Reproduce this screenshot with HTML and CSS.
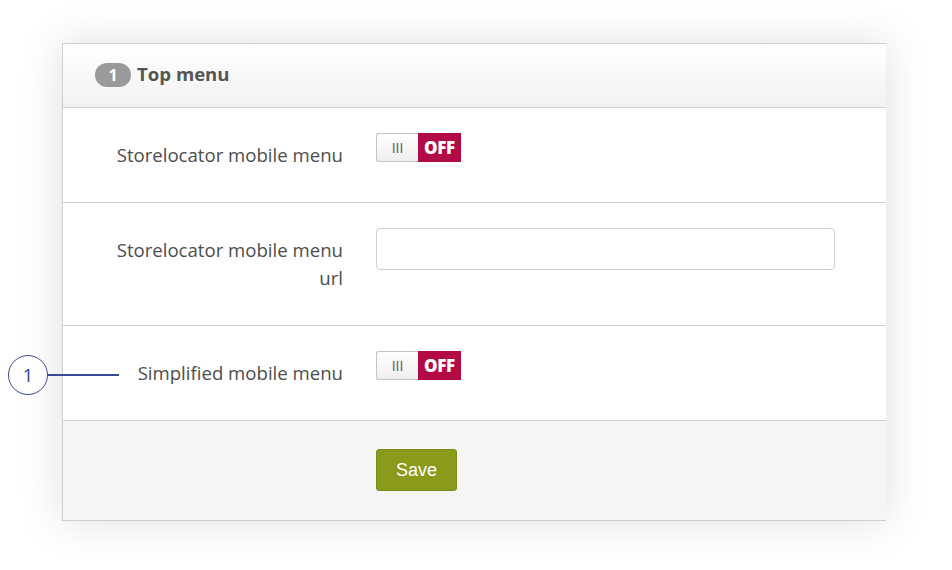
FILE: index.html
```html
<!DOCTYPE html>
<html>
<head>
<meta charset="utf-8">
<link rel="stylesheet" href="styles.css">
</head>
<body>
<div class="stage">
  <div class="panel">
    <div class="panel-head">
      <span class="badge">1</span>
      <span class="head-title">Top menu</span>
    </div>
    <div class="row">
      <div class="label">Storelocator mobile menu</div>
      <div class="control">
        <div class="switch"><span class="grip">III</span><span class="off">OFF</span></div>
      </div>
    </div>
    <div class="row">
      <div class="label">Storelocator mobile menu url</div>
      <div class="control">
        <input class="text-input" type="text">
      </div>
    </div>
    <div class="row">
      <div class="label">Simplified mobile menu</div>
      <div class="control">
        <div class="switch"><span class="grip">III</span><span class="off">OFF</span></div>
      </div>
    </div>
    <div class="panel-foot">
      <button class="save">Save</button>
    </div>
  </div>
  <div class="callout">
    <span class="callout-circle">1</span>
    <span class="callout-line"></span>
  </div>
</div>
</body>
</html>
```
FILE: styles.css
```css
html, body {
  margin: 0;
  padding: 0;
  background: #fff;
}
body {
  font-family: "Open Sans", "DejaVu Sans", sans-serif;
  width: 952px;
  height: 570px;
  overflow: hidden;
}
.stage {
  position: relative;
  padding: 43px 0 0 62px;
}
.panel {
  width: 823px;
  border: 1px solid #cfcfcf;
  border-right: none;
  background: #fff;
  box-shadow: 0 0 40px rgba(0,0,0,0.13);
}
.panel-head {
  display: flex;
  align-items: center;
  padding-left: 32px;
  background: linear-gradient(#fff, #f2f2f2);
  border-bottom: 1px solid #d0d0d0;
  box-sizing: border-box;
  height: 64px;
}
.badge {
  display: inline-flex;
  align-items: center;
  justify-content: center;
  width: 36px;
  height: 24px;
  border-radius: 12px;
  background: #9a9a9a;
  color: #fff;
  font-weight: 700;
  font-size: 16px;
  margin-top: -2px;
}
.head-title {
  margin-left: 6px;
  font-weight: 700;
  font-size: 18.6px;
  color: #555;
  margin-top: -4px;
}
.row {
  display: flex;
  border-bottom: 1px solid #d0d0d0;
  padding: 33px 0 33px 0;
}
.label {
  width: 280px;
  padding-left: 40px;
  text-align: right;
  font-size: 18.6px;
  line-height: 28px;
  color: #4d4d4d;
  box-sizing: border-box;
}
.control {
  margin-left: 33px;
  margin-top: -8px;
}
.switch {
  display: flex;
  width: 85px;
  height: 29px;
}
.grip {
  width: 42px;
  box-sizing: border-box;
  border: 1px solid #c4c4c4;
  border-right: none;
  border-radius: 3px 0 0 3px;
  background: linear-gradient(#fff, #efefef);
  color: #666;
  font-family: "Liberation Sans", sans-serif;
  font-size: 14px;
  display: flex;
  align-items: center;
  justify-content: center;
}
.off {
  width: 43px;
  background: #b30a45;
  color: #fff;
  font-weight: 800;
  font-size: 17px;
  letter-spacing: -0.3px;
  display: flex;
  align-items: center;
  justify-content: center;
}
.text-input {
  display: block;
  width: 459px;
  height: 42px;
  box-sizing: border-box;
  border: 1px solid #cfcfcf;
  border-radius: 4px;
  margin: 0;
  padding: 0 10px;
  background: #fff;
}
.panel-foot {
  background: #f5f5f5;
  padding: 28px 0 29px 313px;
}
.save {
  display: block;
  width: 81px;
  height: 42px;
  background: #8a9a1b;
  border: 1px solid #7c8b16;
  border-radius: 3px;
  color: #fff;
  font-family: "Liberation Sans", Arial, sans-serif;
  font-size: 18px;
  padding: 0;
}
.callout {
  position: absolute;
  left: 8px;
  top: 355px;
  display: flex;
  align-items: center;
}
.callout-circle {
  width: 40px;
  height: 40px;
  box-sizing: border-box;
  border: 1.5px solid #3a4896;
  border-radius: 50%;
  background: #fff;
  color: #3a4896;
  font-family: "Open Sans", sans-serif;
  font-size: 19px;
  display: flex;
  align-items: center;
  justify-content: center;
}
.callout-line {
  width: 71px;
  height: 1.5px;
  background: #3a4896;
}
```
